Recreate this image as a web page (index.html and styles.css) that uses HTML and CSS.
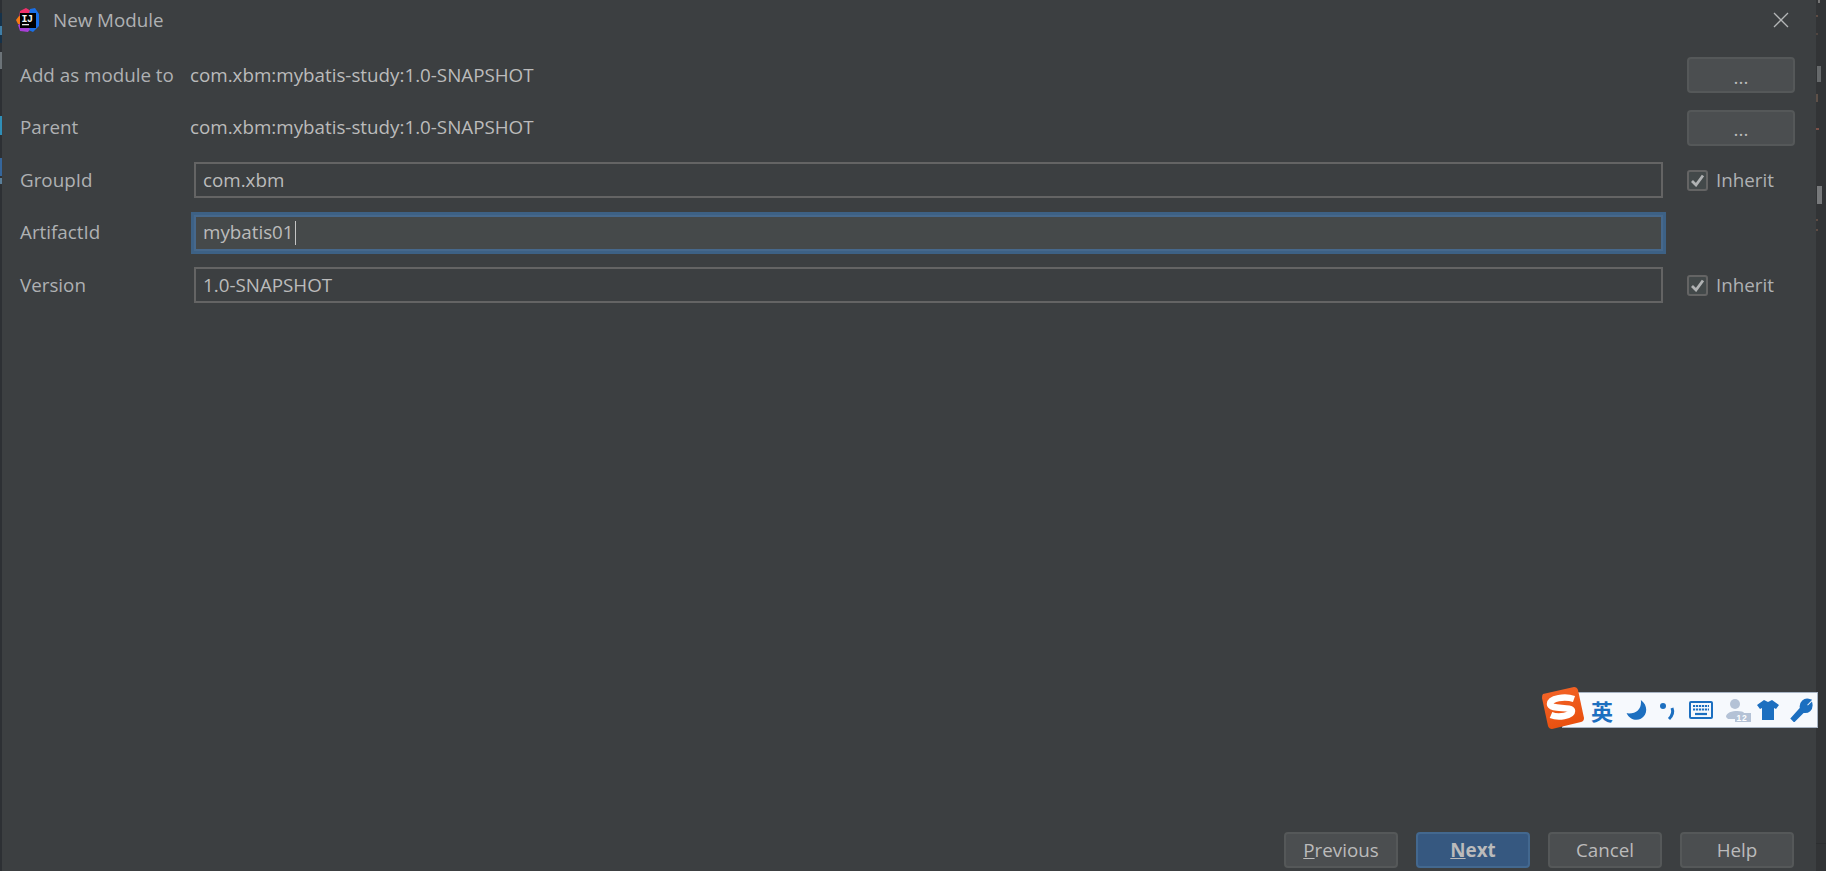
FILE: index.html
```html
<!DOCTYPE html>
<html lang="en">
<head>
<meta charset="utf-8">
<title>New Module</title>
<link rel="stylesheet" href="styles.css">
</head>
<body>
<div class="screen">
  <div class="edge-left"></div>
  <main class="dialog">
    <header class="titlebar">
      <svg class="app-icon" width="24" height="24" viewBox="0 0 24 24">
        <path d="M4 3 L10 0 L15 3 L8 12 L3 10 Z" fill="#f0306a"/>
        <path d="M0 12 L3 8 L6 9 L6 17 L2 16 Z" fill="#f97a12"/>
        <path d="M14 1 L19 0 L23 6 L23 18 L17 24 L10 21 Z" fill="#1a6fe6"/>
        <path d="M2 17 L7 14 L14 21 L12 24 L4 23 Z" fill="#a83fd6"/>
        <rect x="4" y="5" width="16" height="15" fill="#000"/>
        <text class="icon-text" x="5.500" y="13.500">IJ</text>
        <rect x="6" y="16" width="7" height="1.300" fill="#e8e8e8"/>
      </svg>
      <span class="title">New Module</span>
      <svg class="close" width="16" height="16" viewBox="0 0 16 16"><path d="M1 1 L15 15 M15 1 L1 15" stroke="#b4b6b7" stroke-width="1.300" fill="none"/></svg>
    </header>
    <section class="form">
      <span class="label">Add as module to</span>
      <span class="value">com.xbm:mybatis-study:1.0-SNAPSHOT</span>
      <button class="btn btn-browse" type="button">...</button>

      <span class="label">Parent</span>
      <span class="value">com.xbm:mybatis-study:1.0-SNAPSHOT</span>
      <button class="btn btn-browse" type="button">...</button>

      <span class="label">GroupId</span>
      <div class="field">com.xbm</div>
      <label class="inherit"><span class="check"><svg width="15" height="13" viewBox="0 0 15 13"><path d="M2 7 L6 11 L13 1.500" stroke="#b0b2b3" stroke-width="2.800" fill="none"/></svg></span>Inherit</label>

      <span class="label">ArtifactId</span>
      <div class="field field-focus"><span>mybatis01</span><i class="caret"></i></div>
      <span></span>

      <span class="label">Version</span>
      <div class="field">1.0-SNAPSHOT</div>
      <label class="inherit"><span class="check"><svg width="15" height="13" viewBox="0 0 15 13"><path d="M2 7 L6 11 L13 1.500" stroke="#b0b2b3" stroke-width="2.800" fill="none"/></svg></span>Inherit</label>
    </section>
    <footer class="actions">
      <button class="btn" type="button"><u>P</u>revious</button>
      <button class="btn btn-primary" type="button"><u>N</u>ext</button>
      <button class="btn" type="button">Cancel</button>
      <button class="btn" type="button">Help</button>
    </footer>
  </main>
  <div class="edge-right"></div>
  <div class="ime">
    <svg class="ime-logo" width="44" height="44" viewBox="0 0 44 44">
      <defs><linearGradient id="sg" x1="0" y1="0" x2="0.4" y2="1"><stop offset="0" stop-color="#f4662a"/><stop offset="1" stop-color="#e9500f"/></linearGradient></defs>
      <path d="M2 8 L33 1 Q36 1 37 4 L43 32 Q43 35 40 36 L11 43 Q8 43 7 40 L1 12 Q1 9 2 8Z" fill="url(#sg)"/>
      <path d="M33 13 C24 10 9 12 9 18 C9 24 31 20 31 25 C31 30 17 32 10 29" stroke="#fff" stroke-width="6.500" fill="none"/>
    </svg>
    <span class="ime-ch">英</span>
    <svg class="ime-ico ime-moon" width="22" height="22" viewBox="1 1 19 20"><path d="M14 2 C15 10 10 15 1 14 C4 20 10 21 14 19 C20 16 21 7 14 2Z" fill="#1c6fc0"/></svg>
    <svg class="ime-ico ime-comma" width="18" height="22" viewBox="0 0 18 22"><circle cx="4" cy="7" r="3" fill="#1c6fc0"/><path d="M13 9 C15 14 13 17 10 20" stroke="#1c6fc0" stroke-width="3" fill="none"/></svg>
    <svg class="ime-ico ime-keys" width="24" height="18" viewBox="0 0 24 18"><rect x="0" y="0" width="24" height="18" rx="2" fill="#1c6fc0"/><rect x="2" y="2" width="20" height="14" fill="#f6f9fd"/><path d="M4 5h16M4 8.500h16" stroke="#1c6fc0" stroke-width="2.200" stroke-dasharray="2.200 .8"/><path d="M6 13h12" stroke="#1c6fc0" stroke-width="2.200"/></svg>
    <svg class="ime-ico ime-user" width="26" height="24" viewBox="0 0 26 24"><circle cx="10" cy="6" r="5" fill="#b4c2d6"/><path d="M1 19 C1 12 18 12 19 15 L13 15 L13 21 L3 21Z" fill="#b4c2d6"/><rect x="10" y="15" width="16" height="9" fill="#b4c2d6"/><text class="user-num" x="11.500" y="22.800">12</text></svg>
    <svg class="ime-ico ime-shirt" width="22" height="22" viewBox="0 0 22 22"><path d="M7 1 L11 3 L15 1 L22 6 L19 10 L17 9 L17 21 L5 21 L5 9 L3 10 L0 6 Z" fill="#1c6fc0"/></svg>
    <svg class="ime-ico ime-tool" width="24" height="24" viewBox="2 0 20 21"><path d="M4 18 L12 9 C11 4 15 0 20 2 L16 6 L18 8 L21 5 C22 10 18 13 14 12 L6 20 Z" stroke="#1c6fc0" stroke-width="2" fill="#1c6fc0"/></svg>
  </div>
</div>
</body>
</html>
```

FILE: styles.css
```css
* { box-sizing: border-box; }
html, body { margin: 0; height: 100%; overflow: hidden; }
body { background: #2b2b2b; font-family: "Open Sans", "Noto Sans", sans-serif; font-size: 18.800px; color: #bbbbbb; }
.screen { display: flex; width: 1826px; height: 871px; position: relative; overflow: hidden; }
.edge-left {
  width: 2px;
  background-color: #2d3034;
  background-repeat: no-repeat;
  background-image:
    linear-gradient(#16324a, #16324a),
    linear-gradient(#3f7fa8, #3f7fa8),
    linear-gradient(#16324a, #16324a),
    linear-gradient(#6c7378, #6c7378),
    linear-gradient(#2f8fb8, #2f8fb8),
    linear-gradient(#35669c, #35669c),
    linear-gradient(#5a7f9a, #5a7f9a);
  background-size: 2px 13px, 2px 9px, 2px 8px, 2px 17px, 2px 19px, 2px 18px, 2px 6px;
  background-position: 0 13px, 0 26px, 0 35px, 0 52px, 0 116px, 0 158px, 0 178px;
}
.edge-right {
  width: 10px;
  background-color: #323436;
  background-repeat: no-repeat;
  background-image:
    linear-gradient(#767676, #767676),
    linear-gradient(#5e4c44, #5e4c44),
    linear-gradient(#504540, #504540),
    linear-gradient(#66696b, #66696b),
    linear-gradient(#5e5048, #5e5048),
    linear-gradient(#7a5048, #7a5048),
    linear-gradient(#77797b, #77797b),
    linear-gradient(#5e4c44, #5e4c44),
    linear-gradient(#5e4c44, #5e4c44),
    linear-gradient(#2c2e30, #2c2e30);
  background-size: 2px 3px, 2px 2px, 2px 2px, 4px 16px, 2px 8px, 3px 2px, 5px 18px, 2px 2px, 2px 2px, 10px 1px;
  background-position: 2px 0, 0 15px, 0 33px, 1px 66px, 0 94px, 0 128px, 1px 186px, 0 219px, 0 229px, 0 843px;
}
.dialog { flex: 1; background: #3c3f41; display: flex; flex-direction: column; }
.titlebar { height: 42px; flex: none; display: flex; align-items: center; padding: 0 27px 2px 14px; }
.app-icon { flex: none; }
.icon-text { font-family: "Liberation Mono", monospace; font-weight: 700; font-size: 10px; letter-spacing: -0.500px; fill: #f4f4f4; }
.title { margin-left: 13px; color: #afb1b3; }
.close { margin-left: auto; }
.form { flex: 1; display: grid; grid-template-columns: 174px 1fr 132px; grid-auto-rows: 36px; row-gap: 16.500px; align-items: center; padding: 15px 21px 0 18px; }
.label { color: #afb1b3; white-space: nowrap; padding-bottom: 1px; }
.value { color: #bbbbbb; margin-left: -4px; padding-bottom: 1px; }
.form > .btn-browse, .form > .inherit { margin-left: 24px; }
.btn { width: 114px; height: 36px; border: 2px solid #555859; border-radius: 4px; background: #4b4e50; color: #bbbbbb; font: inherit; padding: 0; }
.btn-browse { width: 108px; height: 36px; padding: 3px 0 0; }
.btn-primary { background: #365880; border-color: #43688f; font-weight: 700; color: #bbbbbb; }
.field { height: 36px; border: 2px solid #646464; background: #3c3f41; color: #bbbbbb; display: flex; align-items: center; padding: 0 0 0 7px; }
.field-focus { background: #45494a; border-color: #46688c; outline: 3px solid #3d6185; padding-bottom: 1px; }
.caret { width: 1px; height: 24px; background: #c4c4c4; margin: 2px 0 0 1px; }
.inherit { display: flex; align-items: center; color: #afb1b3; gap: 8px; }
.check { width: 21px; height: 21px; border: 2px solid #646464; border-radius: 3px; background: #43494a; display: flex; align-items: center; justify-content: center; }
.actions { display: flex; justify-content: flex-end; gap: 18px; padding-right: 22px; height: 39px; flex: none; }
.ime { position: absolute; left: 1562px; top: 692px; width: 256px; height: 36px; background: #f6f9fd; border: 1px solid #a8b4c4; display: flex; align-items: center; padding-left: 28px; }
.ime-logo { position: absolute; left: -22px; top: -7px; }
.ime-ch { font-family: "Noto Sans CJK SC", sans-serif; font-weight: 700; font-size: 22px; line-height: 1; color: #1c6fc0; }
.ime-ico { flex: none; }
.ime-moon { margin-left: 13px; }
.ime-comma { margin-left: 11px; }
.ime-keys { margin-left: 12px; }
.ime-user { margin-left: 12px; }
.ime-shirt { margin-left: 6px; }
.ime-tool { margin-left: 10px; }
.user-num { font-family: "Liberation Sans", sans-serif; font-weight: 700; font-size: 8.500px; letter-spacing: 0.800px; fill: #fff; }
```
